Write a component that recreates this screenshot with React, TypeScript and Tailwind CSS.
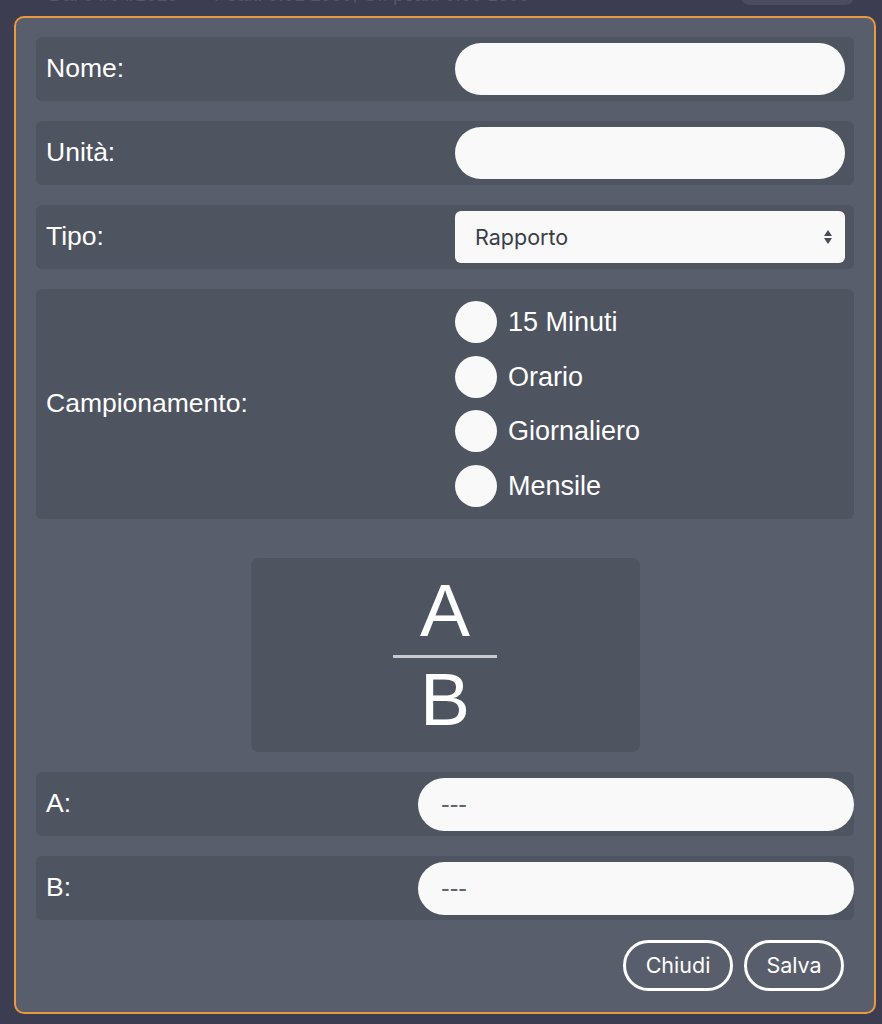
import React from "react";

const labelFont = { fontFamily: '"Liberation Sans", Arial, sans-serif' };
const uiFont = { fontFamily: 'Inter, "Noto Sans", sans-serif' };

function Row({ label, children }: { label: string; children: React.ReactNode }) {
    return (
        <div className="flex h-16 items-center justify-between rounded-md bg-[#4f5461] pl-[10px] pr-[9px]">
            <span className="text-[26.5px] text-white" style={labelFont}>{label}</span>
            {children}
        </div>
    );
}

function TextField() {
    return <div className="h-[52px] w-[390px] rounded-full bg-[#f9f9f9]" />;
}

const options = ["15 Minuti", "Orario", "Giornaliero", "Mensile"];

export default function App() {
    return (
        <div className="h-[1024px] w-full overflow-hidden bg-[#3c3d50]">
            {/* tail of the page behind the dialog */}
            <div className="h-4 overflow-hidden">
                <div className="-mt-[15px] flex items-center justify-between pl-[49px] pr-[28px]">
                    <span className="text-[19px] leading-[20px] text-[#545869]" style={labelFont}>
                        Dal 04/04/2019<span className="ml-[36px]">Peak: 0.01 1000, Off peak: 0.00 1000</span>
                    </span>
                    <div className="mt-[2px] h-[17px] w-[113px] rounded-full bg-[#4b4d5f]" />
                </div>
            </div>

            <div className="ml-[14px] mr-[6px] rounded-[10px] border-2 border-[#e89a40] bg-[#585e6c] px-5 pt-[19px] pb-[21px]">
                <div className="flex flex-col gap-5">
                    <Row label="Nome:"><TextField /></Row>
                    <Row label="Unità:"><TextField /></Row>
                    <Row label="Tipo:">
                        <div className="flex h-[52px] w-[390px] items-center justify-between rounded-md bg-[#f9f9f9] pl-5 pr-[12px]">
                            <span className="text-[21.5px] text-[#3a3d46]" style={uiFont}>Rapporto</span>
                            <svg width="10" height="20" viewBox="0 0 10 20">
                                <path d="M5 3 L9 9 L1 9 Z" fill="#4a4d57" />
                                <path d="M5 17 L9 11 L1 11 Z" fill="#4a4d57" />
                            </svg>
                        </div>
                    </Row>

                    <div className="flex h-[230px] items-center justify-between rounded-md bg-[#4f5461] pl-[10px] pr-[9px]">
                        <span className="text-[26.5px] text-white" style={labelFont}>Campionamento:</span>
                        <div className="flex w-[390px] flex-col gap-[12.67px]">
                            {options.map((o) => (
                                <div key={o} className="flex items-center gap-[11px]">
                                    <div className="h-[42px] w-[42px] rounded-full bg-[#f9f9f9]" />
                                    <span className="text-[27px] leading-[32px] text-white" style={labelFont}>{o}</span>
                                </div>
                            ))}
                        </div>
                    </div>

                    <div className="mt-[19px] flex justify-center">
                        <div className="flex h-[194px] w-[389px] flex-col items-center justify-center rounded-lg bg-[#4f5461]" style={labelFont}>
                            <span className="text-[75px] leading-[75px] text-white">A</span>
                            <div className="mt-[7px] mb-[4px] h-[3px] w-[104px] bg-[#c9cace]" />
                            <span className="text-[75px] leading-[75px] text-white">B</span>
                        </div>
                    </div>

                    {["A:", "B:"].map((l) => (
                        <div key={l} className="flex h-16 items-center justify-between rounded-md bg-[#4f5461] pl-[10px]">
                            <span className="text-[26.5px] text-white" style={labelFont}>{l}</span>
                            <div className="flex h-[53px] w-[436px] items-center rounded-full bg-[#f9f9f9] pl-[23px]">
                                <span className="text-[26px] leading-none text-[#62656d]" style={labelFont}>---</span>
                            </div>
                        </div>
                    ))}

                    <div className="flex justify-end gap-[11px] pr-[10px]">
                        <button className="h-[51px] w-[110px] rounded-full border-[3px] border-white text-[21.5px] text-white" style={uiFont}>Chiudi</button>
                        <button className="h-[51px] w-[100px] rounded-full border-[3px] border-white text-[21.5px] text-white" style={uiFont}>Salva</button>
                    </div>
                </div>
            </div>
        </div>
    );
}
